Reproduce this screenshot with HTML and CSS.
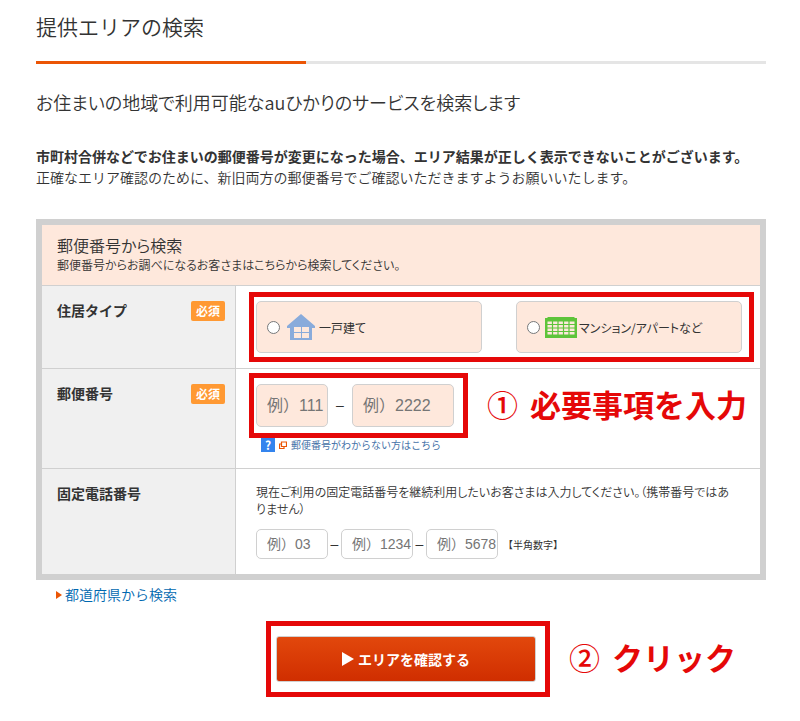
FILE: index.html
```
<!DOCTYPE html>
<html lang="ja">
<head>
    <meta charset="UTF-8">
    <meta name="viewport" content="width=device-width, initial-scale=1.0">
    <title>提供エリアの検索</title>
    <link rel="stylesheet" href="styles.css">
</head>
<body>

<div class="container">
    <h1>提供エリアの検索</h1>
    <h2>お住まいの地域で利用可能なauひかりのサービスを検索します</h2>
    <p class="lead"><strong>市町村合併などでお住まいの郵便番号が変更になった場合、エリア結果が正しく表示できないことがございます。</strong><br>正確なエリア確認のために、新旧両方の郵便番号でご確認いただきますようお願いいたします。</p>

    <form id="areaForm">
        <div class="form-box">
            <div class="form-head">
                <h3>郵便番号から検索</h3>
                <p>郵便番号からお調べになるお客さまはこちらから検索してください。</p>
            </div>

            <div class="form-row">
                <div class="form-label">
                    <span id="typeLabel">住居タイプ</span>
                    <span class="required">必須</span>
                </div>
                <div class="form-cell type-cell">
                    <div class="mark mark-type" role="radiogroup" aria-labelledby="typeLabel">
                        <label class="choice">
                            <input type="radio" name="houseType" value="house">
                            <svg class="icon-house" width="28" height="26" viewBox="0 0 28 26">
                                <path d="M14 0 28 12v2h-3v12H3V14H0v-2z" fill="#89abdb"/>
                                <path d="M7 13h7v5H7zM15 13h7v5h-7zM7 19h7v5H7zM15 19h7v5h-7z" fill="#fee8dc"/>
                            </svg>
                            <span>一戸建て</span>
                        </label>
                        <label class="choice">
                            <input type="radio" name="houseType" value="apartment">
                            <svg class="icon-building" width="32" height="21" viewBox="0 0 32 21">
                                <path d="M3 0h26l1 1h2v20H0V1h2z" fill="#5ec43a"/>
                                <path d="M2.5 4.5h27v13h-27z" fill="#fee8dc"/>
                                <path d="M7.5 4v14M13 4v14M18.500 4v14M24 4v14M2 7.500h28M2 11h28M2 14.500h28" fill="none" stroke="#5ec43a" stroke-width="1.200"/>
                            </svg>
                            <span>マンション/アパートなど</span>
                        </label>
                    </div>
                </div>
            </div>

            <div class="form-row">
                <div class="form-label">
                    <label for="zip1">郵便番号</label>
                    <span class="required">必須</span>
                </div>
                <div class="form-cell zip-cell">
                    <div class="step">
                        <div class="mark mark-zip">
                            <input type="text" id="zip1" name="zip1" class="zip zip-short" placeholder="例）111">
                            <span class="dash dash-wide">–</span>
                            <input type="text" id="zip2" name="zip2" class="zip" placeholder="例）2222" aria-label="郵便番号 下4桁">
                        </div>
                        <p class="note"><span class="note-number">①</span>必要事項を入力</p>
                    </div>
                    <a class="help" href="#">
                        <span class="help-icon">?</span>
                        <svg width="8" height="8" viewBox="0 0 8 8">
                            <path d="M2.500 1h5v4.500h-5zM2 3H.500v4.500H5V6" fill="none" stroke="#eb5505" stroke-width="1.200"/>
                        </svg>
                        <span>郵便番号がわからない方はこちら</span>
                    </a>
                </div>
            </div>

            <div class="form-row">
                <div class="form-label">
                    <label for="tel1">固定電話番号</label>
                </div>
                <div class="form-cell tel-cell">
                    <p>現在ご利用の固定電話番号を継続利用したいお客さまは入力してください。（携帯番号ではありません）</p>
                    <div class="tel-group">
                        <input type="tel" id="tel1" name="tel1" class="tel" placeholder="例）03">
                        <span class="dash">–</span>
                        <input type="tel" id="tel2" name="tel2" class="tel" placeholder="例）1234" aria-label="市内局番">
                        <span class="dash">–</span>
                        <input type="tel" id="tel3" name="tel3" class="tel" placeholder="例）5678" aria-label="加入者番号">
                        <span class="hint">【半角数字】</span>
                    </div>
                </div>
            </div>
        </div>

        <a class="pref-link" href="#">都道府県から検索</a>

        <div class="step submit-step">
            <div class="mark mark-submit">
                <button type="submit">
                    <svg width="12" height="14" viewBox="0 0 12 14"><path d="M0 0 12 7 0 14z" fill="#fff"/></svg>
                    エリアを確認する
                </button>
            </div>
            <p class="note"><span class="note-number">②</span>クリック</p>
        </div>
    </form>
</div>

</body>
</html>
```
FILE: styles.css
```
* {
    box-sizing: border-box;
}
body {
    font-family: "Noto Sans CJK JP", sans-serif;
    font-size: 14px;
    line-height: 21px;
    color: #333;
    background-color: #fff;
    margin: 0;
}
h1, h2, h3, p {
    margin: 0;
    font-weight: 350;
}
.container {
    padding: 11px 34px 20px 36px;
}
h1 {
    font-size: 21px;
    line-height: 30px;
    padding-bottom: 20px;
    border-bottom: 3px solid;
    border-image: linear-gradient(to right, #eb5505 37%, #e5e5e5 37%) 1;
}
h2 {
    font-size: 18px;
    line-height: 26px;
    margin-top: 25px;
    font-feature-settings: "palt";
}
.lead {
    margin: 31px 0;
}
.lead strong {
    font-weight: bold;
}
.form-box {
    border: 6px solid #d0d0d0;
}
.form-head {
    padding: 10px 15px;
    background-color: #fee8dc;
    font-size: 12px;
    line-height: 20px;
    font-feature-settings: "palt";
}
h3 {
    font-size: 16px;
    line-height: 20px;
}
.form-row {
    display: flex;
    border-top: 1px solid #d0d0d0;
}
.form-label {
    display: flex;
    justify-content: space-between;
    align-items: flex-start;
    flex: 0 0 194px;
    padding: 15px 10px 15px 15px;
    border-right: 1px solid #d0d0d0;
    background-color: #f0f0f0;
    font-weight: bold;
    line-height: 19px;
}
.required {
    padding: 0 5px;
    border-radius: 2px;
    background-color: #ff9933;
    color: #fff;
    font-size: 12px;
    line-height: 20px;
}
.form-cell {
    flex: 1;
    min-width: 0;
    font-size: 12px;
}
.type-cell {
    padding: 6px 6px 6px 13px;
}
.zip-cell {
    padding: 4px 6px 16px 13px;
}
.tel-cell {
    padding: 14px 26px 15px 20px;
    line-height: 17px;
}
.tel-cell p {
    font-feature-settings: "palt";
}
/* red frames round the parts to fill in */
.mark {
    display: flex;
    align-items: center;
    border: 5px solid #e50808;
}
.mark-type {
    gap: 34px;
    padding: 4px 7px 4px 2px;
}
.mark-zip {
    padding: 6px 9px 6px 2px;
}
.mark-submit {
    padding: 10px 9px 10px 5px;
}
.choice {
    display: flex;
    align-items: center;
    flex: 1;
    height: 52px;
    padding-left: 10px;
    border: 1px solid #d0d0d0;
    border-radius: 5px;
    background-color: #fee8dc;
    font-feature-settings: "palt";
}
.choice input {
    width: 13px;
    height: 13px;
    margin: 0;
}
.icon-house {
    margin: 0 4px 0 7px;
}
.icon-building {
    margin: 0 2px 0 5px;
}
.step {
    display: flex;
    align-items: center;
    gap: 19px;
}
.note {
    padding-bottom: 4px;
    color: #e50808;
    font-size: 31px;
    font-weight: bold;
    line-height: 40px;
    white-space: nowrap;
}
.note-number {
    margin-right: 12px;
    font-weight: 500;
}
.zip, .tel {
    padding: 0 0 0 10px;
    border: 1px solid #d0d0d0;
    border-radius: 5px;
    font-family: "Liberation Sans", "Noto Sans CJK JP", sans-serif;
}
.zip {
    width: 102px;
    height: 43px;
    background-color: #fee8dc;
    font-size: 16px;
}
.zip-short {
    width: 72px;
}
.tel {
    width: 72px;
    height: 30px;
    background-color: #fff;
    font-size: 14px;
}
.tel-group {
    display: flex;
    align-items: center;
    margin-top: 12px;
}
.dash {
    width: 13px;
    font-family: "Liberation Sans", sans-serif;
    font-size: 14px;
    text-align: center;
}
.dash-wide {
    width: 24px;
}
.hint {
    margin-left: 5px;
    font-size: 10px;
}
.help {
    display: flex;
    align-items: center;
    gap: 4px;
    width: fit-content;
    padding-left: 12px;
    color: #4672a8;
    font-size: 10px;
    line-height: 14px;
    text-decoration: none;
}
.help-icon {
    width: 14px;
    background-color: #3384ee;
    color: #fff;
    font-size: 12px;
    font-weight: bold;
    text-align: center;
}
.pref-link {
    display: inline-flex;
    align-items: center;
    gap: 3px;
    margin: 4px 0 0 20px;
    color: #0068b0;
    font-weight: 350;
    text-decoration: none;
}
.pref-link::before {
    content: "";
    border: solid transparent;
    border-width: 4px 0 4px 6px;
    border-left-color: #eb5505;
}
.submit-step {
    margin: 16px 0 0 230px;
}
button {
    display: flex;
    justify-content: center;
    align-items: center;
    gap: 4px;
    width: 260px;
    height: 46px;
    border: 1px solid #d0d0d0;
    border-radius: 3px;
    background: linear-gradient(#e2480c, #d02e00);
    color: #fff;
    font-family: inherit;
    font-size: 14px;
    font-weight: bold;
    cursor: pointer;
}
```
